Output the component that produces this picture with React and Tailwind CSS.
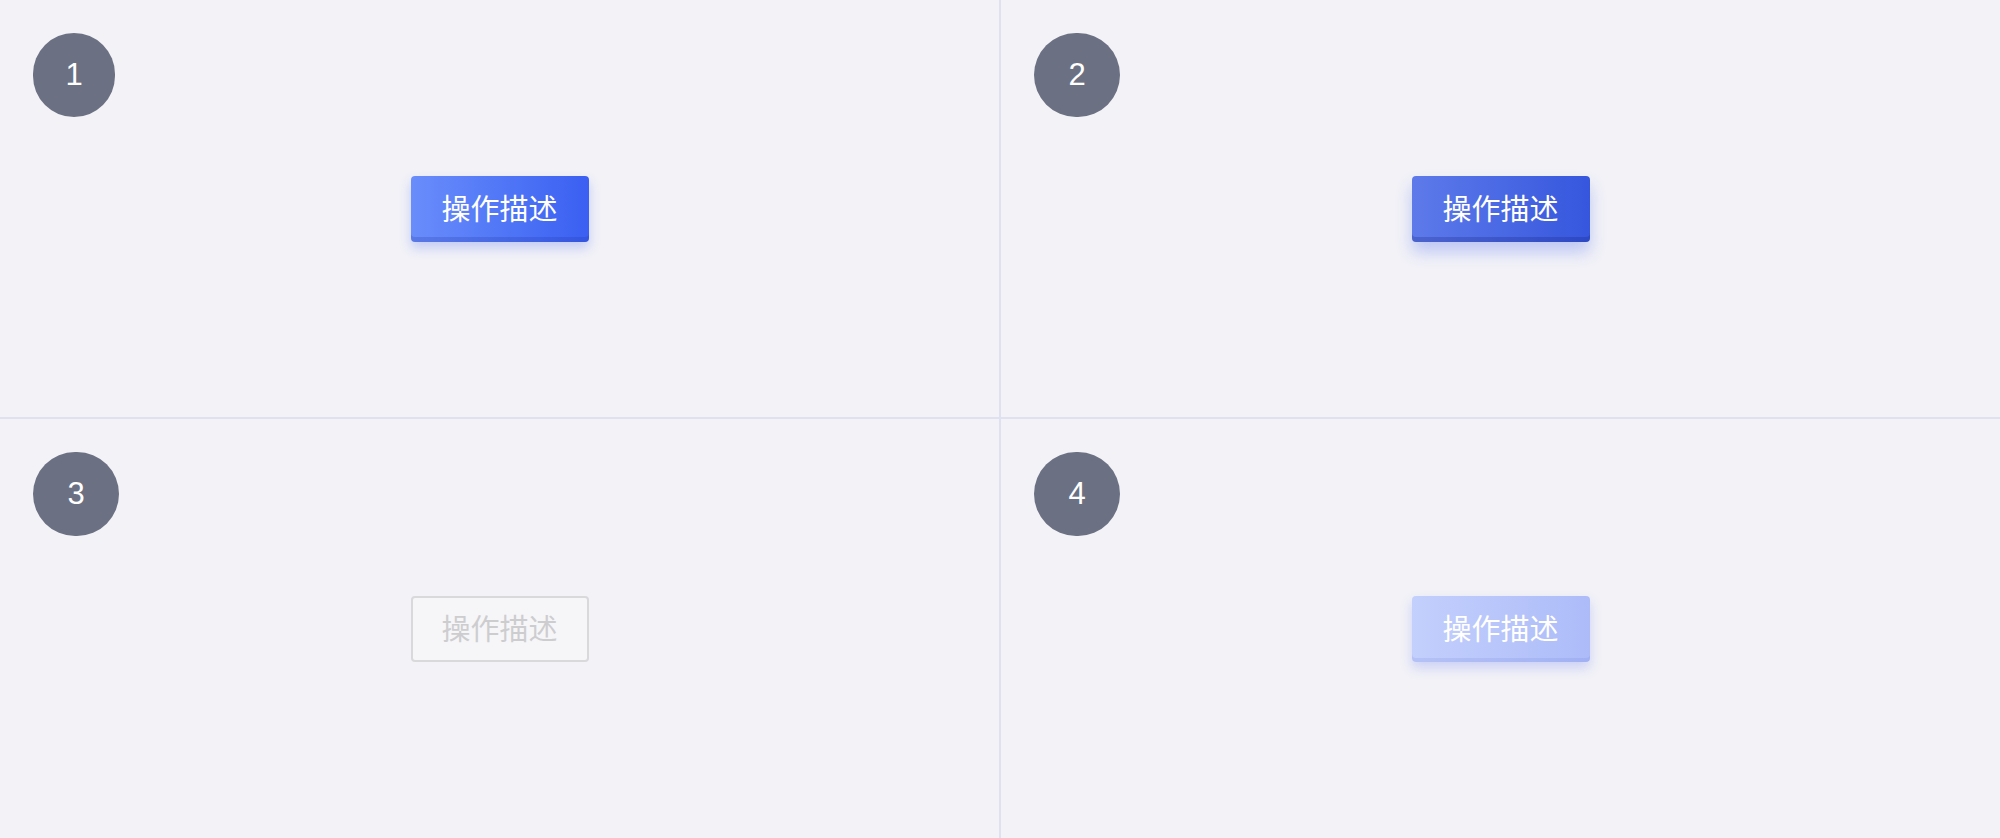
import React from "react";

const CELLS = [
  {
    n: "1",
    badge: "w-[82px]",
    btn: "bg-gradient-to-r from-[#6a8dfb] to-[#3a5ff2] text-white shadow-[inset_0_-5px_0_rgba(30,50,160,0.22),0_6px_12px_rgba(70,100,240,0.28)]",
  },
  {
    n: "2",
    badge: "w-[86px]",
    btn: "bg-gradient-to-r from-[#5e7aea] to-[#3656de] text-white shadow-[inset_0_-5px_0_rgba(20,30,120,0.25),0_10px_16px_rgba(70,100,240,0.3)]",
  },
  {
    n: "3",
    badge: "w-[86px]",
    btn: "bg-[#f6f6f8] border-2 border-[#d9d9dc] text-[#cdcdd0]",
  },
  {
    n: "4",
    badge: "w-[86px]",
    btn: "bg-gradient-to-r from-[#c3cffc] to-[#adbcf9] text-white shadow-[inset_0_-4px_0_rgba(60,80,200,0.1),0_6px_12px_rgba(90,110,240,0.25)]",
  },
];

export default function App() {
  return (
    <div
      className="grid grid-cols-[999px_999px] grid-rows-[417px_419px] gap-[2px] w-[2000px] h-[838px] bg-[#dfe1f0]"
      style={{ fontFamily: '"Noto Sans CJK SC", "Noto Sans", sans-serif' }}
    >
      {CELLS.map((c) => (
        <div key={c.n} className="relative bg-[#f2f2f7] flex items-center justify-center">
          <div
            className={`absolute top-[33px] left-[33px] h-[84px] ${c.badge} rounded-full bg-[#6b7183] flex items-center justify-center text-white text-[31px] font-['Liberation_Sans',sans-serif]`}
          >
            {c.n}
          </div>
          <button
            className={`w-[178px] h-[66px] rounded-[4px] flex items-center justify-center text-[29px] leading-none pb-[2px] ${c.btn}`}
          >
            操作描述
          </button>
        </div>
      ))}
    </div>
  );
}
